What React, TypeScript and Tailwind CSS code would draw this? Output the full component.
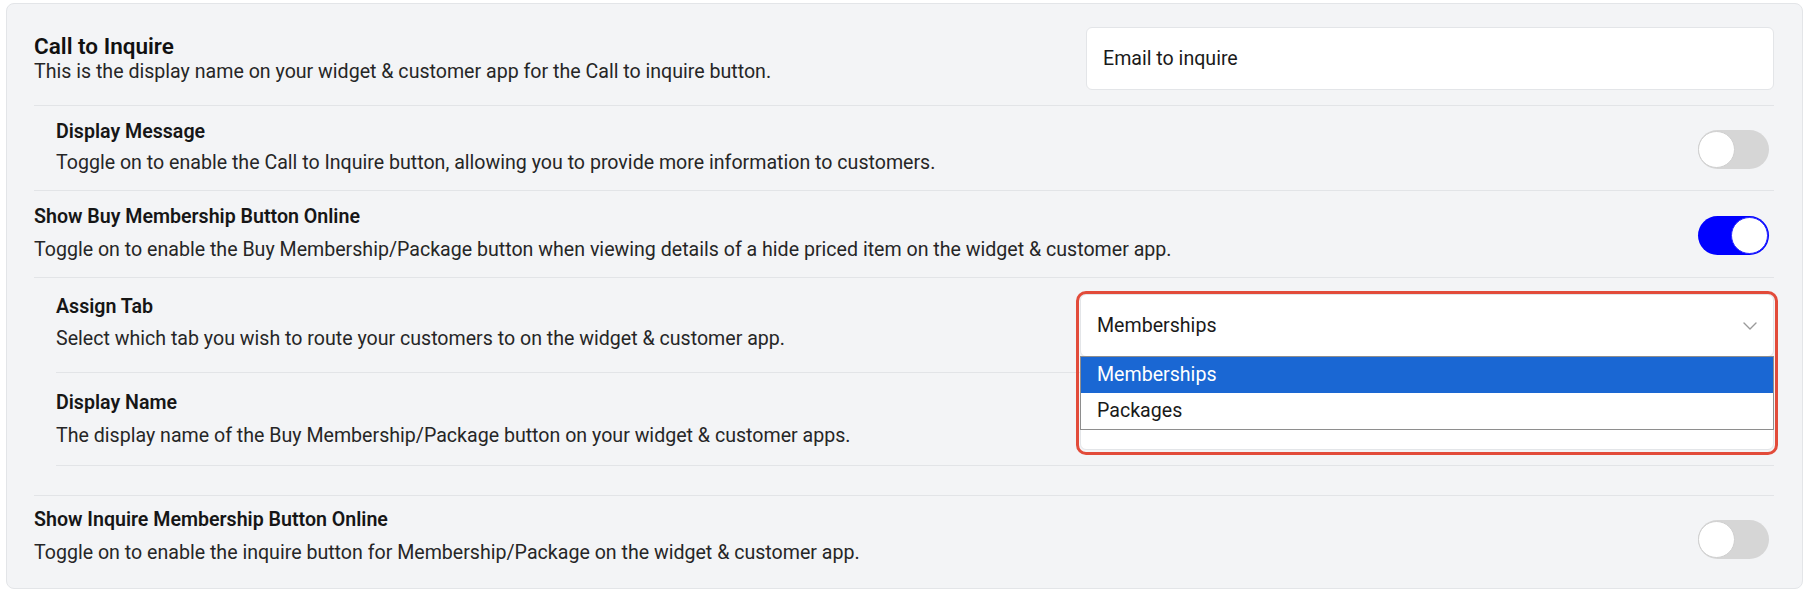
import { useState } from "react";

const Toggle = ({ on, className = "" }: { on: boolean; className?: string }) => (
  <div
    className={`relative mr-[5px] h-[39px] w-[71px] shrink-0 rounded-full ${
      on ? "bg-[#0000ff]" : "bg-[#d6d6d6]"
    } ${className}`}
  >
    <div
      className={`absolute top-[1px] h-[37px] w-[37px] rounded-full border bg-white ${
        on ? "right-[1px] border-[#2a2aff]" : "left-[0px] border-[#cfcfcf] bg-[#fafafa]"
      }`}
    />
  </div>
);

const TextBlock = ({
  label,
  desc,
  gap = "mt-[4px]",
}: {
  label: string;
  desc: string;
  gap?: string;
}) => (
  <div className="flex flex-col">
    <div className="text-[19.6px] font-semibold leading-[29px] text-[#161616]">{label}</div>
    <div className={`text-[19.6px] leading-[29px] text-[#262626] ${gap}`}>{desc}</div>
  </div>
);

const Chevron = () => (
  <svg width="14" height="8" viewBox="0 0 14 8" fill="none">
    <path d="M1 1l6 6 6-6" stroke="#9a9a9a" strokeWidth="1.4" strokeLinecap="round" strokeLinejoin="round" />
  </svg>
);

export default function App() {
  const [tab] = useState("Memberships");
  const options = ["Memberships", "Packages"];

  return (
    <div className="min-h-screen bg-white pl-[6px] pr-[9px] pt-[3px] font-['Roboto',sans-serif]">
      <div className="rounded-lg border border-[#e3e5e8] bg-[#f3f4f6] pb-[21px] pl-[27px] pr-[28px] pt-[23px]">
        {/* Call to Inquire */}
        <div className="flex items-center justify-between border-b border-[#e2e4e7] pb-[15px]">
          <div className="flex flex-col">
            <div className="text-[22.5px] font-semibold leading-[26px] text-[#111]">Call to Inquire</div>
            <div className="text-[19.6px] leading-[26px] text-[#262626]">
              This is the display name on your widget &amp; customer app for the Call to inquire button.
            </div>
          </div>
          <div className="flex h-[63px] w-[688px] items-center rounded-md border border-[#e3e5e8] bg-white px-[16px] text-[19.6px] text-[#1a1a1a]">
            Email to inquire
          </div>
        </div>

        {/* Display Message */}
        <div className="flex items-start justify-between border-b border-[#e2e4e7] pb-[13px] pl-[22px] pt-[11px]">
          <TextBlock
            label="Display Message"
            desc="Toggle on to enable the Call to Inquire button, allowing you to provide more information to customers."
            gap="mt-[2px]"
          />
          <Toggle on={false} className="mt-[13px]" />
        </div>

        {/* Show Buy Membership */}
        <div className="flex items-start justify-between border-b border-[#e2e4e7] pb-[13px] pt-[11px]">
          <TextBlock
            label="Show Buy Membership Button Online"
            desc="Toggle on to enable the Buy Membership/Package button when viewing details of a hide priced item on the widget & customer app."
          />
          <Toggle on className="mt-[14px]" />
        </div>

        {/* nested settings */}
        <div className="border-b border-[#e2e4e7] pb-[29px] pl-[22px]">
          <div className="flex items-start justify-between border-b border-[#e2e4e7] pb-[15px] pt-[14px]">
            <TextBlock
              label="Assign Tab"
              desc="Select which tab you wish to route your customers to on the widget & customer app."
              gap="mt-[3px]"
            />
            <div className="relative mt-[2px] w-[694px]">
              <div className="flex h-[63px] items-center justify-between rounded-md border border-[#e3e5e8] bg-white pl-[16px] pr-[16px] text-[19.6px] text-[#1a1a1a]">
                <span>{tab}</span>
                <Chevron />
              </div>
              <div className="absolute left-0 right-0 top-[62px] z-10 border border-[#8e8e8e] bg-white">
                {options.map((o) => (
                  <div
                    key={o}
                    className={`flex h-[36px] items-center px-[16px] text-[19.6px] ${
                      o === tab ? "bg-[#1a67d3] text-white" : "text-[#1a1a1a]"
                    }`}
                  >
                    {o}
                  </div>
                ))}
              </div>
              <div className="pointer-events-none absolute -left-[4px] -right-[4px] -top-[3px] z-20 h-[164px] rounded-[10px] border-[3px] border-[#e24b3a]" />
            </div>
          </div>

          <div className="flex items-center justify-between border-b border-[#e2e4e7] pb-[15px] pt-[14px]">
            <TextBlock
              label="Display Name"
              desc="The display name of the Buy Membership/Package button on your widget & customer apps."
            />
            <div className="h-[63px] w-[694px] rounded-md border border-[#e3e5e8] bg-white" />
          </div>
        </div>

        {/* Show Inquire */}
        <div className="flex items-start justify-between pt-[9px]">
          <TextBlock
            label="Show Inquire Membership Button Online"
            desc="Toggle on to enable the inquire button for Membership/Package on the widget & customer app."
          />
          <Toggle on={false} className="mt-[15px]" />
        </div>
      </div>
    </div>
  );
}
